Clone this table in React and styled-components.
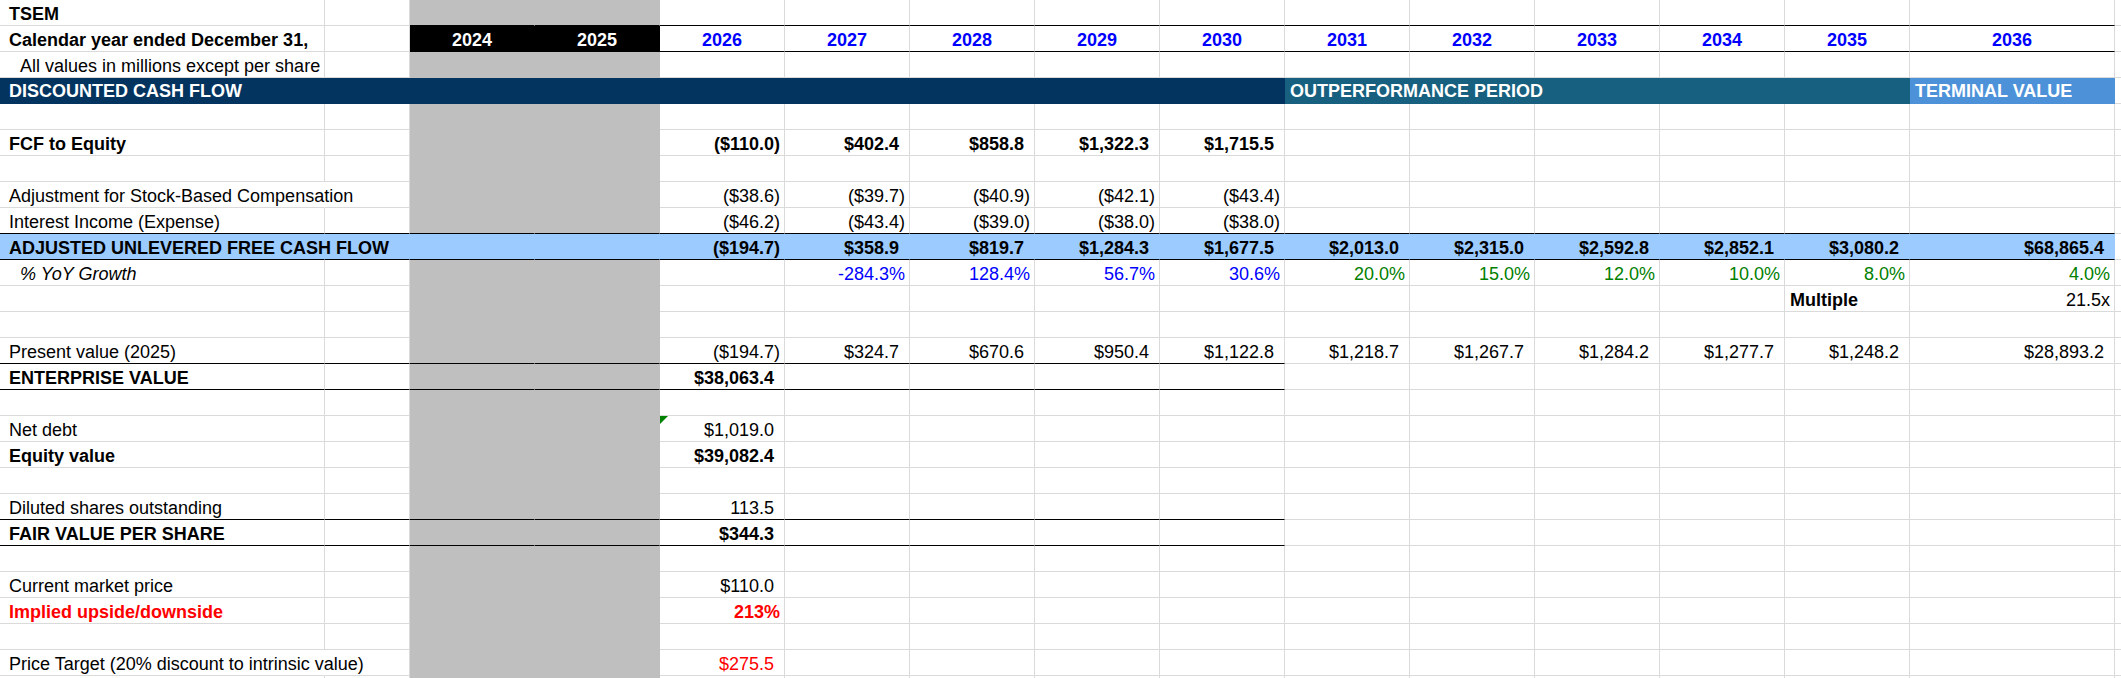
import styled, { createGlobalStyle } from "styled-components"

const COLS = "325px 85px repeat(12, 125px) 205px 1fr"
const GRID = "#dadada"
const GRAY = "#bfbfbf"
const NAVY = "#03345f"
const TEAL = "#176080"
const SKY = "#4d92d9"
const LIGHT = "#9bcbff"
const BLUE = "#0000ff"
const GREEN = "#008000"
const RED = "#ff0000"

const GlobalStyle = createGlobalStyle`
  html, body {
    margin: 0;
    padding: 0;
    background: #fff;
    overflow: hidden;
  }
  body {
    font-family: "Liberation Sans", Arial, sans-serif;
    font-size: 18px;
    color: #000;
  }
`

const Sheet = styled.div`
  display: flex;
  flex-direction: column;
  width: 2121px;
  height: 678px;
  overflow: hidden;
`

const Row = styled.div`
  display: grid;
  grid-template-columns: ${COLS};
  height: 26px;
  flex: none;
`

const Cell = styled.div`
  position: relative;
  box-sizing: border-box;
  height: 26px;
  padding: 3px 4px 0 4px;
  line-height: 22px;
  white-space: nowrap;
  font-weight: ${p => (p.$bold ? 700 : 400)};
  font-style: ${p => (p.$italic ? "italic" : "normal")};
  color: ${p => p.$color || "#000"};
  background: ${p => p.$fill || "transparent"};
  border-right: 1px solid ${p => (p.$spill ? "transparent" : p.$fill || GRID)};
  border-bottom: 1px solid ${p => (p.$rule ? "#000" : p.$fill || GRID)};
  overflow: ${p => (p.$spill ? "visible" : "hidden")};
  z-index: ${p => (p.$spill ? 1 : 0)};
`

const Label = styled(Cell)`
  padding-left: ${p => (p.$indent ? 20 : 9)}px;
`

const Value = styled(Cell)`
  text-align: ${p => p.$align || "right"};
  padding-left: 5px;
`

const Year = styled(Cell)`
  text-align: center;
  font-weight: 700;
`

// hidden ")" keeps positive figures lined up with the negatives
const Pad = styled.span`
  visibility: hidden;
`

const Flag = styled.span`
  position: absolute;
  top: 0;
  left: 0;
  width: 0;
  height: 0;
  border-top: 8px solid ${GREEN};
  border-right: 8px solid transparent;
`

const Band = styled.div`
  grid-column: ${p => p.$span};
  box-sizing: border-box;
  height: 26px;
  padding: 2px 4px 0 ${p => p.$padL || 5}px;
  line-height: 22px;
  white-space: nowrap;
  background: ${p => p.$fill};
  box-shadow: 0 -1px 0 ${p => p.$fill};
  color: #fff;
  font-weight: 700;
`

const Filler = styled.div`
  box-sizing: border-box;
  height: 26px;
  border-bottom: 1px solid ${GRID};
`

const years = [2026, 2027, 2028, 2029, 2030, 2031, 2032, 2033, 2034, 2035, 2036]

const rows = [
  { label: "TSEM", bold: true, rule: [2, 14] },
  { label: "Calendar year ended December 31,", bold: true, years: true, rule: [2, 14] },
  { label: "All values in millions except per share", indent: true },
  { band: true },
  {},
  {
    label: "FCF to Equity",
    bold: true,
    valBold: true,
    vals: ["($110.0)", "$402.4", "$858.8", "$1,322.3", "$1,715.5"],
  },
  {},
  {
    label: "Adjustment for Stock-Based Compensation",
    spill: true,
    vals: ["($38.6)", "($39.7)", "($40.9)", "($42.1)", "($43.4)"],
  },
  {
    label: "Interest Income (Expense)",
    rule: [0, 14],
    vals: ["($46.2)", "($43.4)", "($39.0)", "($38.0)", "($38.0)"],
  },
  {
    label: "ADJUSTED UNLEVERED FREE CASH FLOW",
    bold: true,
    valBold: true,
    spill: true,
    fill: LIGHT,
    rule: [0, 14],
    vals: [
      "($194.7)", "$358.9", "$819.7", "$1,284.3", "$1,677.5", "$2,013.0",
      "$2,315.0", "$2,592.8", "$2,852.1", "$3,080.2", "$68,865.4",
    ],
  },
  {
    label: "% YoY Growth",
    italic: true,
    indent: true,
    vals: [
      "",
      { t: "-284.3%", c: BLUE },
      { t: "128.4%", c: BLUE },
      { t: "56.7%", c: BLUE },
      { t: "30.6%", c: BLUE },
      { t: "20.0%", c: GREEN },
      { t: "15.0%", c: GREEN },
      { t: "12.0%", c: GREEN },
      { t: "10.0%", c: GREEN },
      { t: "8.0%", c: GREEN },
      { t: "4.0%", c: GREEN },
    ],
  },
  {
    vals: ["", "", "", "", "", "", "", "", "", { t: "Multiple", b: true, a: "left" }, "21.5x"],
  },
  {},
  {
    label: "Present value (2025)",
    rule: [0, 8],
    vals: [
      "($194.7)", "$324.7", "$670.6", "$950.4", "$1,122.8", "$1,218.7",
      "$1,267.7", "$1,284.2", "$1,277.7", "$1,248.2", "$28,893.2",
    ],
  },
  { label: "ENTERPRISE VALUE", bold: true, valBold: true, rule: [0, 8], vals: ["$38,063.4"] },
  {},
  { label: "Net debt", flag: true, vals: ["$1,019.0"] },
  { label: "Equity value", bold: true, valBold: true, vals: ["$39,082.4"] },
  {},
  { label: "Diluted shares outstanding", rule: [0, 8], vals: ["113.5"] },
  { label: "FAIR VALUE PER SHARE", bold: true, valBold: true, rule: [0, 8], vals: ["$344.3"] },
  {},
  { label: "Current market price", vals: ["$110.0"] },
  {
    label: "Implied upside/downside",
    bold: true,
    color: RED,
    valBold: true,
    vals: [{ t: "213%", c: RED }],
  },
  {},
  {
    label: "Price Target (20% discount to intrinsic value)",
    spill: true,
    vals: [{ t: "$275.5", c: RED }],
  },
  {},
]

const inRule = (rule, c) => !!rule && c >= rule[0] && c <= rule[1]

const fillFor = (spec, c) => {
  if (spec.fill) return spec.fill
  if (c === 2 || c === 3) return spec.years ? "#000" : GRAY
  return null
}

const Amount = ({ text }) => {
  const pad = text && !/[)%x]$/.test(text)
  return (
    <>
      {text}
      {pad && <Pad>)</Pad>}
    </>
  )
}

const BandRow = () => (
  <Row>
    <Band $span="1 / 10" $fill={NAVY} $padL={9}>DISCOUNTED CASH FLOW</Band>
    <Band $span="10 / 15" $fill={TEAL}>OUTPERFORMANCE PERIOD</Band>
    <Band $span="15 / 16" $fill={SKY}>TERMINAL VALUE</Band>
    <Filler />
  </Row>
)

const SheetRow = ({ spec }) => {
  if (spec.band) return <BandRow />
  const vals = spec.vals || []
  return (
    <Row>
      <Label
        $bold={spec.bold}
        $italic={spec.italic}
        $indent={spec.indent}
        $color={spec.color}
        $spill={spec.spill}
        $fill={fillFor(spec, 0)}
        $rule={inRule(spec.rule, 0)}
      >
        {spec.label}
      </Label>
      <Cell $fill={fillFor(spec, 1)} $rule={inRule(spec.rule, 1)} />
      {[2, 3].map(c =>
        spec.years ? (
          <Year key={c} $color="#fff" $fill="#000" $rule>
            {2022 + c}
          </Year>
        ) : (
          <Cell key={c} $fill={fillFor(spec, c)} $rule={inRule(spec.rule, c)} />
        )
      )}
      {years.map((y, i) => {
        const c = i + 4
        if (spec.years) {
          return (
            <Year key={y} $color={BLUE} $rule={inRule(spec.rule, c)}>
              {y}
            </Year>
          )
        }
        const v = vals[i] || ""
        const text = typeof v === "string" ? v : v.t
        return (
          <Value
            key={y}
            $bold={typeof v === "object" && v.b !== undefined ? v.b : spec.valBold}
            $color={typeof v === "object" ? v.c : undefined}
            $align={typeof v === "object" ? v.a : undefined}
            $fill={fillFor(spec, c)}
            $rule={inRule(spec.rule, c)}
          >
            {spec.flag && i === 0 && <Flag />}
            {typeof v === "object" && v.a === "left" ? text : <Amount text={text} />}
          </Value>
        )
      })}
      <Filler />
    </Row>
  )
}

export default function App() {
  return (
    <>
      <GlobalStyle />
      <Sheet>
        {rows.map((spec, i) => (
          <SheetRow key={i} spec={spec} />
        ))}
      </Sheet>
    </>
  )
}
